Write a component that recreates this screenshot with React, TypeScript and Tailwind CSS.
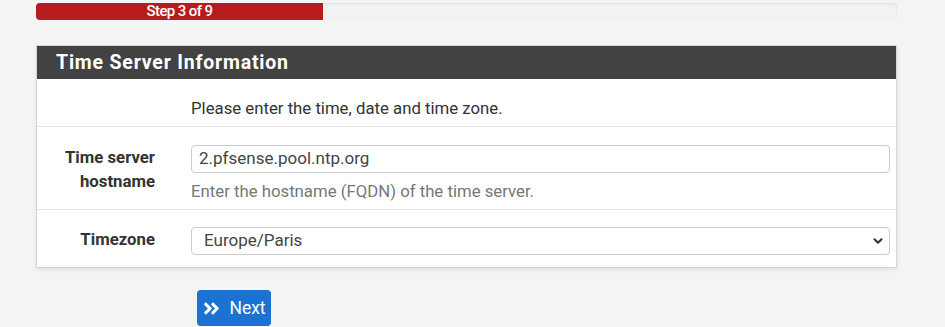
import { ChevronDown } from "lucide-react";

function AngleDoubleRight() {
  return (
    <svg viewBox="0 0 448 512" className="w-[19px] h-[19px] fill-white">
      <path d="M224.3 273l-136 136c-9.4 9.4-24.6 9.4-33.9 0l-22.6-22.6c-9.4-9.4-9.4-24.6 0-33.9l96.4-96.4-96.4-96.4c-9.4-9.4-9.4-24.6 0-33.9L54.3 103c9.4-9.4 24.6-9.4 33.9 0l136 136c9.5 9.4 9.5 24.6.1 34zm192-34l-136-136c-9.4-9.4-24.6-9.4-33.9 0l-22.6 22.6c-9.4 9.4-9.4 24.6 0 33.9l96.4 96.4-96.4 96.4c-9.4 9.4-9.4 24.6 0 33.9l22.6 22.6c9.4 9.4 24.6 9.4 33.9 0l136-136c9.4-9.2 9.4-24.4 0-33.8z" />
    </svg>
  );
}

export default function App() {
  return (
    <div
      className="min-h-[327px] bg-[#f4f4f4] px-[36px] pt-[3px] text-[16.75px] text-[#333]"
      style={{ fontFamily: "Roboto, 'Liberation Sans', sans-serif" }}
    >
      {/* Progress */}
      <div className="h-[17px] w-[861px] rounded-[4px] bg-[#f2f2f2] shadow-[inset_0_1px_2px_rgba(0,0,0,0.1)] overflow-hidden">
        <div className="h-full w-[287px] bg-[#b71c1c] flex items-center justify-center text-white text-[15px] font-medium tracking-[-0.6px] leading-none">
          Step 3 of 9
        </div>
      </div>

      {/* Panel */}
      <div className="mt-[25px] w-[861px] border border-[#d6d6d6] bg-white shadow-[0_2px_4px_rgba(0,0,0,0.08)]">
        <div className="h-[33px] bg-[#424242] flex items-center px-[19px] text-white text-[19.5px] font-bold tracking-[0.8px]">
          Time Server Information
        </div>

        <div className="h-[48px] flex items-center border-b border-[#e3e3e3] pl-[154px]">
          <span className="mt-[12px]">Please enter the time, date and time zone.</span>
        </div>

        <div className="h-[83px] flex border-b border-[#e3e3e3] pt-[18px]">
          <div className="w-[118px] text-right font-bold leading-[24px]">
            Time server
            <br />
            hostname
          </div>
          <div className="ml-[36px] w-[699px]">
            <div className="h-[28px] rounded-[4px] border border-[#ccc] px-[7px] flex items-center text-[#444] text-[17px]">
              2.pfsense.pool.ntp.org
            </div>
            <div className="mt-[6px] text-[#777]">Enter the hostname (FQDN) of the time server.</div>
          </div>
        </div>

        <div className="h-[57px] flex pt-[17px]">
          <div className="w-[118px] text-right font-bold leading-[24px]">Timezone</div>
          <div className="ml-[36px] w-[699px]">
            <div className="h-[28px] rounded-[4px] border border-[#ccc] pl-[12px] pr-[4px] flex items-center justify-between text-[#444] text-[17px]">
              <span>Europe/Paris</span>
              <ChevronDown className="w-[14px] h-[14px] text-[#333]" strokeWidth={3.5} />
            </div>
          </div>
        </div>
      </div>

      <div className="mt-[22px] pl-[161px]">
        <button className="h-[36px] w-[74px] rounded-[4px] bg-[#1b72d2] flex items-center justify-center gap-[8px] text-white text-[17.5px]">
          <AngleDoubleRight />
          Next
        </button>
      </div>
    </div>
  );
}
